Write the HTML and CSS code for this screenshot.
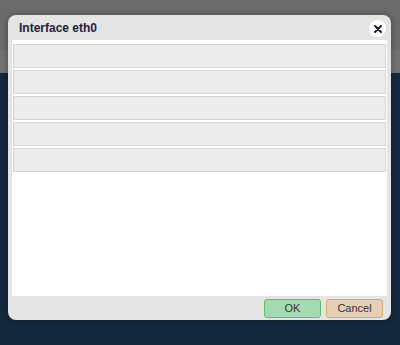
FILE: index.html
```html
<!DOCTYPE html>
<html lang="en">
<head>
    <meta charset="UTF-8">
    <meta name="viewport" content="width=device-width, initial-scale=1.0">
    <title>Interface eth0</title>
    <link rel="stylesheet" href="styles.css">
</head>
<body>
    <div class="page">
        <div class="topbar"></div>
        <div class="toolbar"></div>
        <div class="content"></div>
    </div>

    <div class="dialog">
        <div class="dialog-head">
            <span class="dialog-title">Interface eth0</span>
            <button type="button" class="close-btn" title="Close">
                <svg width="10" height="10" viewBox="0 0 10 10">
                    <path d="M2 2 L8 8 M8 2 L2 8" stroke="#1a1a2e" stroke-width="2" stroke-linecap="round"/>
                </svg>
            </button>
        </div>
        <div class="dialog-body">
            <div class="row"></div>
            <div class="row"></div>
            <div class="row"></div>
            <div class="row"></div>
            <div class="row"></div>
        </div>
        <div class="dialog-foot">
            <button type="button" class="btn btn-ok">OK</button>
            <button type="button" class="btn btn-cancel">Cancel</button>
        </div>
    </div>
</body>
</html>
```

FILE: styles.css
```css
body {
    margin: 0;
    padding: 0;
    font-family: "Liberation Sans", Arial, sans-serif;
    background-color: #14283e;
}
.page {
    height: 345px;
    display: flex;
    flex-direction: column;
}
.topbar {
    height: 50px;
    background-color: #6b6b6b;
}
.toolbar {
    height: 23px;
    background-color: #727272;
}
.content {
    flex: 1;
    background-color: #14283e;
}

/* dialog over the page */
.dialog {
    position: absolute;
    left: 8px;
    top: 15px;
    width: 383px;
    height: 305px;
    display: flex;
    flex-direction: column;
    background-color: #e4e4e4;
    border-radius: 8px;
    box-shadow: 0 0 6px rgba(0, 0, 0, 0.35);
    overflow: hidden;
}
.dialog-head {
    height: 25px;
    display: flex;
    align-items: center;
    justify-content: space-between;
    padding: 0 5px 0 11px;
}
.dialog-title {
    font-size: 12px;
    font-weight: bold;
    color: #22223a;
}
.close-btn {
    width: 17px;
    height: 17px;
    padding: 0;
    border: none;
    border-radius: 50%;
    background-color: #fff;
    display: flex;
    align-items: center;
    justify-content: center;
    margin-top: 2px;
}
.dialog-body {
    flex: 1;
    background-color: #fff;
    margin: 0 4px;
    padding: 4px 1px;
    display: flex;
    flex-direction: column;
    gap: 2px;
}
.row {
    height: 22px;
    background-color: #ececec;
    border: 1px solid #d4d4d4;
}
.dialog-foot {
    height: 24px;
    display: flex;
    align-items: center;
    justify-content: flex-end;
    gap: 5px;
    padding: 0 8px 0 0;
}
.btn {
    width: 57px;
    height: 19px;
    padding: 0;
    font-family: "Liberation Sans", Arial, sans-serif;
    font-size: 11px;
    color: #333;
    border-radius: 3px;
}
.btn-ok {
    background-color: #a4dab0;
    border: 1px solid #5cbf6a;
}
.btn-cancel {
    background-color: #e6cfb5;
    border: 1px solid #cbb06a;
}
```
